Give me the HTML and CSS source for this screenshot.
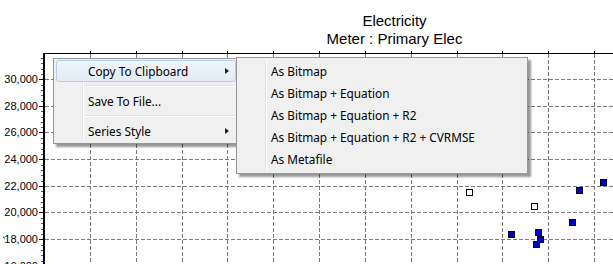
FILE: index.html
```html
<!DOCTYPE html>
<html lang="en">
<head>
    <meta charset="UTF-8">
    <title>Electricity chart</title>
    <link rel="stylesheet" href="styles.css">
</head>
<body>
    <div class="chart">
        <div class="title">
            <div>Electricity</div>
            <div>Meter : Primary Elec</div>
        </div>

        <svg class="plot" width="613" height="264">
            <!-- grid -->
            <g class="grid">
                <line x1="90.5" y1="54" x2="90.5" y2="264"/>
                <line x1="136.5" y1="54" x2="136.5" y2="264"/>
                <line x1="182.5" y1="54" x2="182.5" y2="264"/>
                <line x1="227.5" y1="54" x2="227.5" y2="264"/>
                <line x1="273.5" y1="54" x2="273.5" y2="264"/>
                <line x1="319.5" y1="54" x2="319.5" y2="264"/>
                <line x1="365.5" y1="54" x2="365.5" y2="264"/>
                <line x1="411.5" y1="54" x2="411.5" y2="264"/>
                <line x1="457.5" y1="54" x2="457.5" y2="264"/>
                <line x1="502.5" y1="54" x2="502.5" y2="264"/>
                <line x1="548.5" y1="54" x2="548.5" y2="264"/>
                <line x1="594.5" y1="54" x2="594.5" y2="264"/>
                <line x1="45" y1="79.5" x2="613" y2="79.5"/>
                <line x1="45" y1="106.5" x2="613" y2="106.5"/>
                <line x1="45" y1="132.5" x2="613" y2="132.5"/>
                <line x1="45" y1="159.5" x2="613" y2="159.5"/>
                <line x1="45" y1="186.5" x2="613" y2="186.5"/>
                <line x1="45" y1="212.5" x2="613" y2="212.5"/>
                <line x1="45" y1="239.5" x2="613" y2="239.5"/>
            </g>
            <!-- frame + ticks -->
            <g class="frame">
                <line x1="43" y1="53.5" x2="613" y2="53.5"/>
                <line class="axis" x1="44" y1="53" x2="44" y2="264"/>
                <path class="ticks" d="M90.5 51V53M136.5 51V53M182.5 51V53M227.5 51V53M273.5 51V53M319.5 51V53M365.5 51V53M411.5 51V53M457.5 51V53M502.5 51V53M548.5 51V53M594.5 51V53
                    M39 79.5H43M39 106.5H43M39 132.5H43M39 159.5H43M39 186.5H43M39 212.5H43M39 239.5H43"/>
                <path class="minor" d="M41 58.5H43M41 63.5H43M41 69.5H43M41 74.5H43M41 85.5H43M41 90.5H43M41 95.5H43M41 101.5H43M41 111.5H43M41 117.5H43M41 122.5H43M41 127.5H43M41 138.5H43M41 143.5H43M41 149.5H43M41 154.5H43M41 165.5H43M41 170.5H43M41 175.5H43M41 181.5H43M41 191.5H43M41 197.5H43M41 202.5H43M41 207.5H43M41 218.5H43M41 223.5H43M41 229.5H43M41 234.5H43M41 245.5H43M41 250.5H43M41 255.5H43M41 261.5H43"/>
            </g>
            <!-- data -->
            <g class="open">
                <rect x="466.5" y="189.5" width="6" height="6"/>
                <rect x="531.5" y="203.5" width="6" height="6"/>
            </g>
            <g class="filled">
                <rect x="600.5" y="179.5" width="6" height="6"/>
                <rect x="576.5" y="187.5" width="6" height="6"/>
                <rect x="569.5" y="219.5" width="6" height="6"/>
                <rect x="508.5" y="231.5" width="6" height="6"/>
                <rect x="535.5" y="229.5" width="6" height="6"/>
                <rect x="537.5" y="236.5" width="6" height="6"/>
                <rect x="533.5" y="241.5" width="6" height="6"/>
            </g>
        </svg>

        <div class="yaxis">
            <span>30,000</span>
            <span>28,000</span>
            <span>26,000</span>
            <span>24,000</span>
            <span>22,000</span>
            <span>20,000</span>
            <span>18,000</span>
            <span>16,000</span>
        </div>
        <span class="ytitle">,</span>
    </div>

    <div class="menu main">
        <div class="item active">Copy To Clipboard<i class="arrow"></i></div>
        <div class="sep"></div>
        <div class="item">Save To File...</div>
        <div class="sep"></div>
        <div class="item">Series Style<i class="arrow"></i></div>
    </div>

    <div class="menu sub">
        <div class="item">As Bitmap</div>
        <div class="item">As Bitmap + Equation</div>
        <div class="item">As Bitmap + Equation + R2</div>
        <div class="item">As Bitmap + Equation + R2 + CVRMSE</div>
        <div class="item">As Metafile</div>
    </div>
</body>
</html>
```

FILE: styles.css
```css
body {
    margin: 0;
    width: 613px;
    height: 264px;
    overflow: hidden;
    background: #fff;
    position: relative;
}
.chart {
    position: relative;
    width: 613px;
    height: 264px;
    overflow: hidden;
    font-family: "Liberation Sans", Arial, sans-serif;
    color: #000;
}
.title {
    padding-left: 176px;
    padding-top: 12px;
    width: 437px;
    text-align: center;
    font-size: 15px;
    line-height: 18px;
}
.plot {
    position: absolute;
    left: 0;
    top: 0;
}
.grid line {
    stroke: #7a7a7a;
    stroke-width: 1;
    stroke-dasharray: 4 2;
}
.frame line {
    stroke: #000;
    stroke-width: 1;
}
.frame .axis {
    stroke-width: 2;
}
.ticks {
    stroke: #000;
    stroke-width: 1;
    fill: none;
}
.minor {
    stroke: #555;
    stroke-width: 1;
    fill: none;
}
.open rect {
    fill: #fff;
    stroke: #000;
    stroke-width: 1;
}
.filled rect {
    fill: #0000c8;
    stroke: #000;
    stroke-width: 1;
}
.yaxis {
    position: absolute;
    left: 0;
    top: 66px;
    width: 38px;
    display: flex;
    flex-direction: column;
    align-items: flex-end;
    font-size: 11px;
}
.yaxis span {
    height: 26.67px;
    line-height: 26.67px;
}
.ytitle {
    position: absolute;
    left: 1px;
    top: 228px;
    font-size: 11px;
    transform: rotate(-20deg);
}

/* context menus */
.menu {
    position: absolute;
    background: #f0f0f0;
    border: 1px solid #979797;
    box-shadow: 3px 3px 2px rgba(0, 0, 0, 0.4);
    font-family: "Noto Sans", "Open Sans", sans-serif;
    font-size: 11.8px;
    color: #000;
}
.menu::before {
    content: "";
    position: absolute;
    left: 28px;
    top: 2px;
    bottom: 2px;
    width: 1px;
    background: #e2e3e3;
    border-right: 1px solid #fff;
}
.main {
    left: 53px;
    top: 58px;
    width: 180px;
    padding: 1px 2px;
}
.sub {
    left: 236px;
    top: 57px;
    width: 286px;
    padding: 2px 2px 3px;
}
.item {
    position: relative;
    height: 22px;
    line-height: 21px;
    padding-left: 31px;
    border: 1px solid transparent;
    box-sizing: border-box;
    border-radius: 3px;
}
.item.active {
    border-color: #aecff0;
    background: linear-gradient(#f1f5fb, #e2ebf6);
}
.sep {
    position: relative;
    height: 8px;
    margin-left: 29px;
}
.sep::after {
    content: "";
    position: absolute;
    left: 0;
    right: 0;
    top: 3px;
    height: 1px;
    background: #e0e0e0;
    border-bottom: 1px solid #fff;
}
.arrow {
    position: absolute;
    right: 6px;
    top: 7px;
    width: 0;
    height: 0;
    border-left: 4px solid #222;
    border-top: 3px solid transparent;
    border-bottom: 3px solid transparent;
}
```
